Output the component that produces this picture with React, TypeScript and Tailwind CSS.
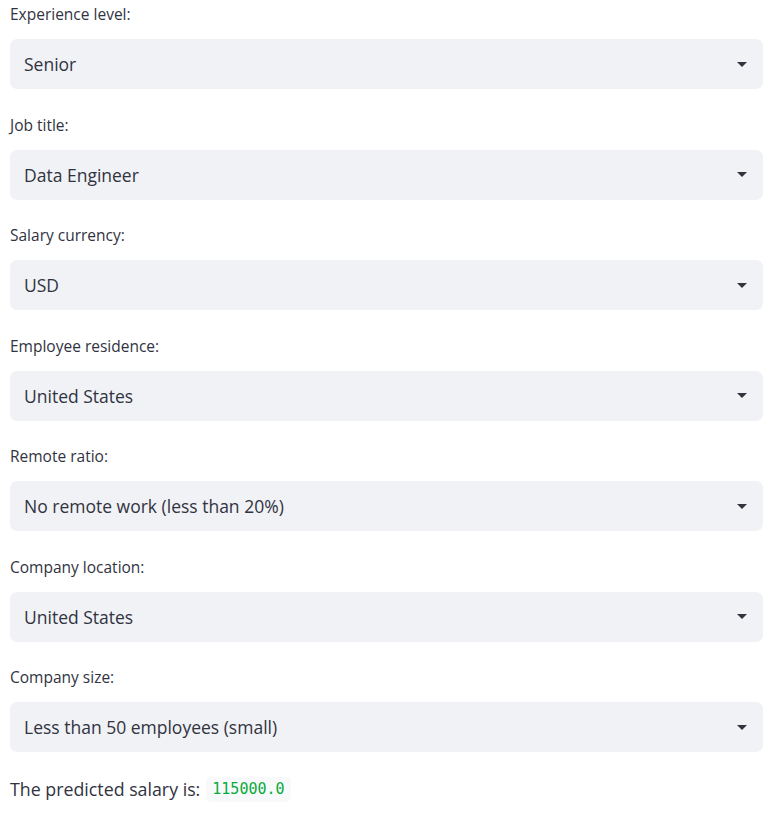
const fields = [
  { label: "Experience level:", value: "Senior" },
  { label: "Job title:", value: "Data Engineer" },
  { label: "Salary currency:", value: "USD" },
  { label: "Employee residence:", value: "United States" },
  { label: "Remote ratio:", value: "No remote work (less than 20%)" },
  { label: "Company location:", value: "United States" },
  { label: "Company size:", value: "Less than 50 employees (small)" },
];

function Caret() {
  return (
    <svg width="10" height="5" viewBox="0 0 10 5" className="shrink-0">
      <polygon points="0,0 10,0 5,5" fill="#31333F" />
    </svg>
  );
}

export default function App() {
  return (
    <div
      className="w-[777px] h-[816px] bg-white px-[10px] text-[#31333F] overflow-hidden"
      style={{ fontFamily: '"Open Sans", "Liberation Sans", sans-serif' }}
    >
      <div className="flex flex-col gap-[21.5px]">
        {fields.map((f) => (
          <div key={f.label} className="flex flex-col">
            <div className="h-[39px] pt-[3px] text-[15.5px] leading-[22px]">{f.label}</div>
            <div className="h-[50px] w-[753px] rounded-[7px] bg-[#F0F2F6] flex items-center justify-between pl-[14px] pr-[16px]">
              <span className="text-[17.5px] leading-[26px]">{f.value}</span>
              <Caret />
            </div>
          </div>
        ))}
      </div>
      <div className="mt-[24px] flex items-center text-[17.8px] leading-[26px]">
        <span>The predicted salary is:</span>
        <code
          className="ml-[6px] rounded-[5px] bg-[#F8F9FB] px-[6px] py-[1px] text-[15px] leading-[23px] text-[#09AB3B]"
          style={{ fontFamily: '"DejaVu Sans Mono", "Liberation Mono", monospace' }}
        >
          115000.0
        </code>
      </div>
    </div>
  );
}
